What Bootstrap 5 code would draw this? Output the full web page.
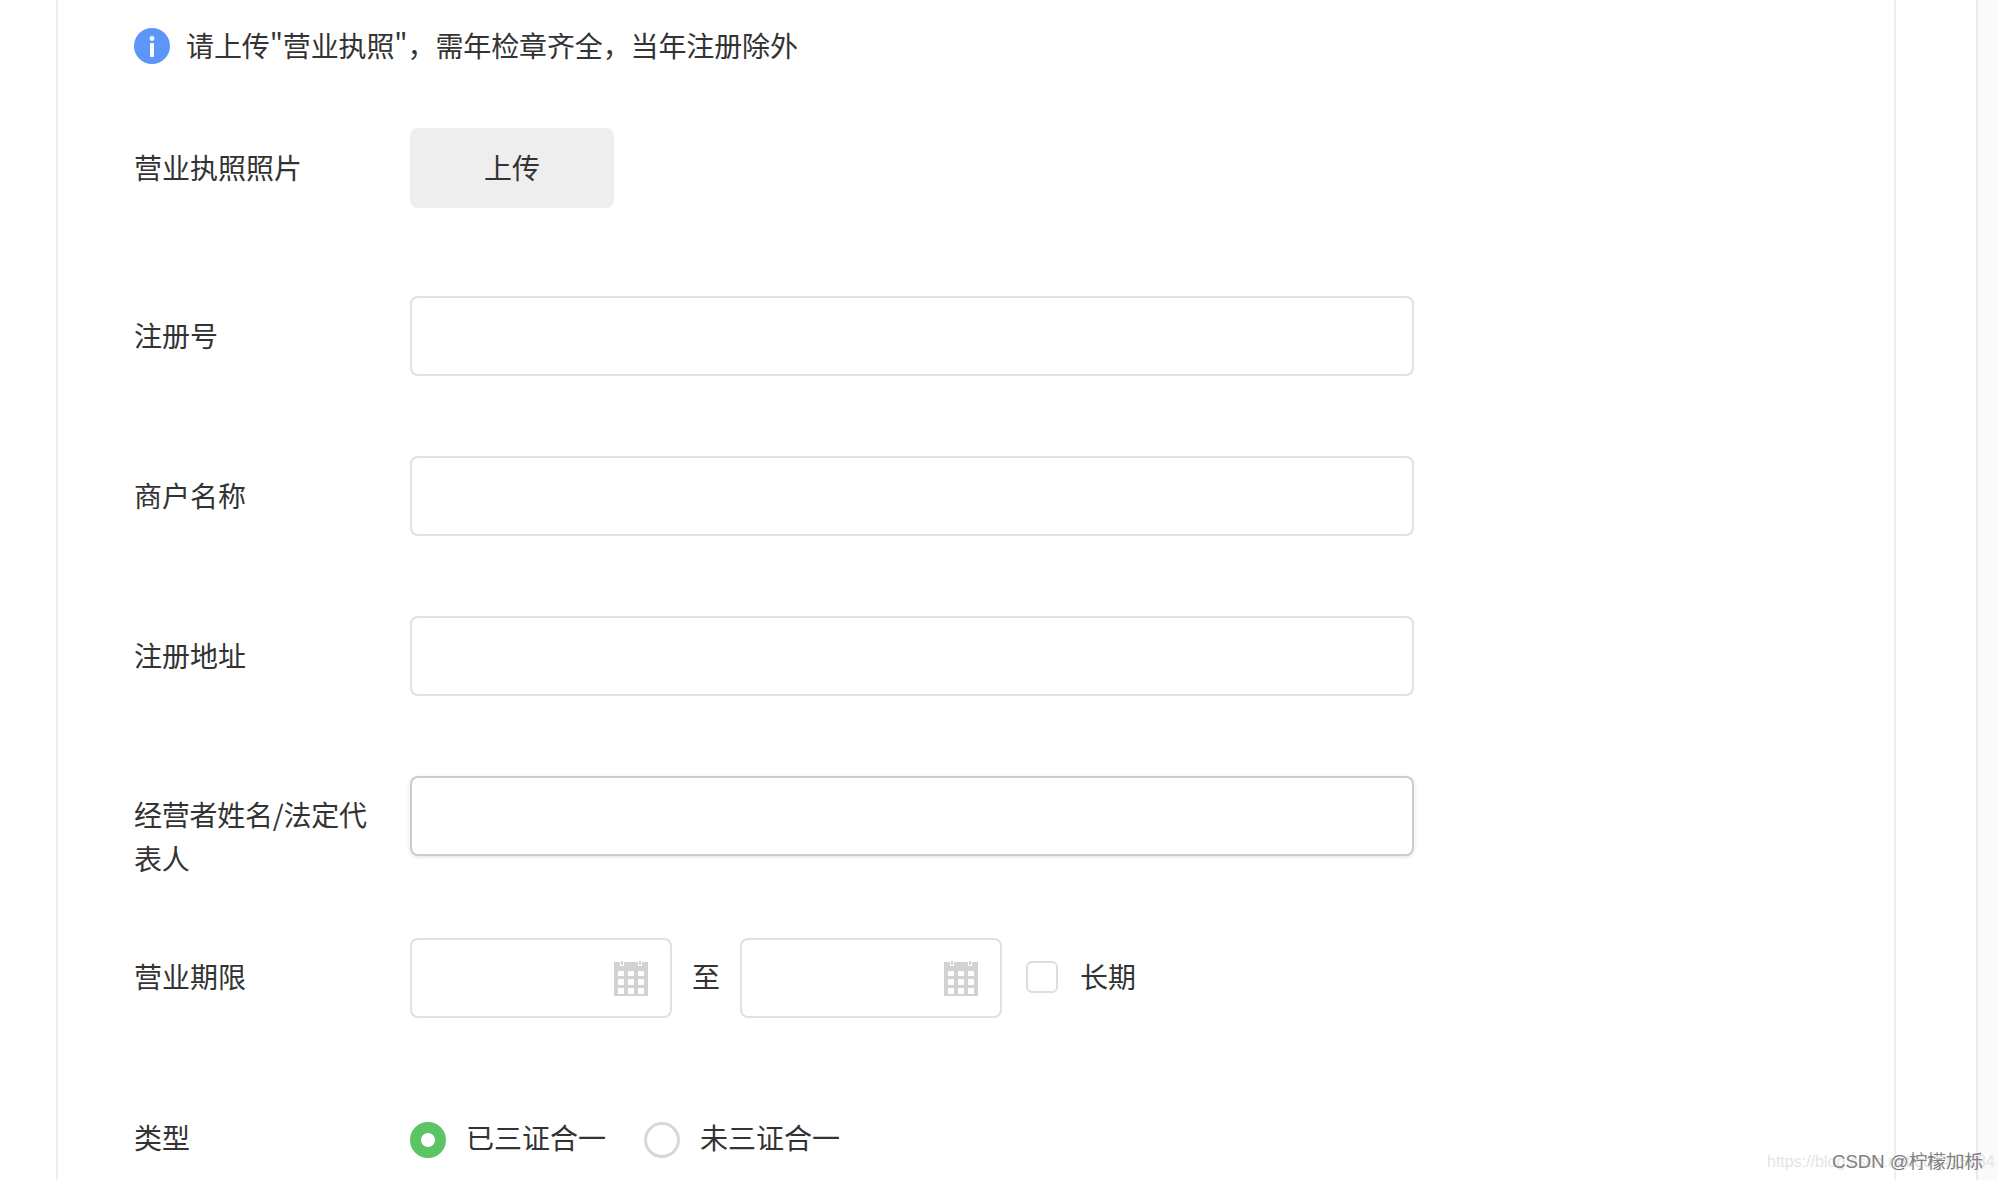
<!DOCTYPE html>
<html lang="zh-CN">
<head>
  <meta charset="UTF-8">
  <title>营业执照</title>
  <link href="https://cdn.jsdelivr.net/npm/bootstrap@5.3.0/dist/css/bootstrap.min.css" rel="stylesheet">
  <style>
    html, body { height: 1180px; overflow: hidden; }
    body { background: #f9fafc; color: #333; font-family: "Noto Sans CJK SC", "Liberation Sans", sans-serif; font-size: 28px; line-height: 44px; }
    .page-wrap { width: 1978px; height: 1180px; background: #fff; border-right: 2px solid #e9e9ef; padding: 0 80px 0 56px; }
    .panel-box { height: 1180px; border-left: 2px solid #eee; border-right: 2px solid #eee; padding: 28px 0 0 76px; }
    .info-line { height: 36px; margin-bottom: 64px; gap: 16px; }
    .info-line span { letter-spacing: -.12px; margin-bottom: 3px; }
    .form-line { min-height: 80px; margin-bottom: 80px; }
    .form-line > span, .form-line > label { margin-bottom: 3px; }
    .form-line.upload-line { margin-bottom: 88px; }
    .form-line.wrap-line { margin-bottom: 55px; }
    .form-line.wrap-line .field-label { padding-top: 16px; letter-spacing: -.25px; }
    .form-line.date-line > span, .form-line.date-line > label { margin-bottom: 4px; }
    .field-label { flex: 0 0 276px; padding-right: 36px; margin: 0; color: #333; }
    .btn-upload { width: 204px; height: 80px; background: #eee; border: 0; border-radius: 8px; color: #333; font-size: 28px; padding: 0 0 3px; }
    .form-control.field-input { width: 1004px; height: 80px; border: 2px solid #e0e0e0; border-radius: 8px; }
    .form-control.field-input.is-active { border-color: #ccc; box-shadow: 0 1px 4px rgba(0, 0, 0, .12); }
    .date-field { width: 262px; height: 80px; }
    .date-field .form-control { width: 100%; height: 100%; border: 2px solid #e0e0e0; border-radius: 8px; }
    .date-field svg { position: absolute; right: 24px; top: 22px; }
    .date-sep { width: 68px; text-align: center; }
    .form-check-input.box-check { width: 32px; height: 32px; margin: 0 22px 2px 24px; border: 2px solid #ddd; border-radius: 6px; }
    .form-check-input.dot-radio { width: 36px; height: 36px; margin: 4px 20px 0 0; border: 3px solid #d8d8d8; }
    .form-check-input.dot-radio:checked { background: #fff; background-image: none; border: 11px solid #5cc464; }
    .radio-text { margin-right: 38px; }
    .mark-csdn { position: absolute; left: 1832px; top: 1148px; font-family: "Liberation Sans", "Noto Sans CJK SC", sans-serif; font-size: 18.6px; line-height: 28px; color: #808080; }
    .mark-url { position: absolute; left: 1767px; top: 1151px; font-family: "Liberation Sans", sans-serif; font-size: 16px; line-height: 22px; color: #e4e4e4; }
  </style>
</head>
<body>
  <div class="page-wrap">
    <div class="panel-box">

      <!-- Aviso -->
      <div class="d-flex align-items-center info-line">
        <svg width="36" height="36" viewBox="0 0 36 36">
          <circle cx="18" cy="18" r="18" fill="#5b96f8"/>
          <circle cx="18" cy="10.5" r="2.4" fill="#fff"/>
          <rect x="16" y="15" width="4" height="14" rx="1" fill="#fff"/>
        </svg>
        <span>请上传"营业执照"，需年检章齐全，当年注册除外</span>
      </div>

      <form>
        <div class="d-flex align-items-center form-line upload-line">
          <label class="field-label">营业执照照片</label>
          <button type="button" class="btn btn-upload">上传</button>
        </div>

        <div class="d-flex align-items-center form-line">
          <label class="field-label">注册号</label>
          <input type="text" class="form-control field-input">
        </div>

        <div class="d-flex align-items-center form-line">
          <label class="field-label">商户名称</label>
          <input type="text" class="form-control field-input">
        </div>

        <div class="d-flex align-items-center form-line">
          <label class="field-label">注册地址</label>
          <input type="text" class="form-control field-input">
        </div>

        <div class="d-flex align-items-start form-line wrap-line">
          <label class="field-label">经营者姓名/法定代表人</label>
          <input type="text" class="form-control field-input is-active">
        </div>

        <!-- Fechas -->
        <div class="d-flex align-items-center form-line date-line">
          <label class="field-label">营业期限</label>
          <div class="position-relative date-field">
            <input type="text" class="form-control">
            <svg width="34" height="36" viewBox="0 0 34 36"><use href="#cal"/></svg>
          </div>
          <span class="date-sep">至</span>
          <div class="position-relative date-field">
            <input type="text" class="form-control">
            <svg width="34" height="36" viewBox="0 0 34 36"><use href="#cal"/></svg>
          </div>
          <input type="checkbox" class="form-check-input box-check">
          <span>长期</span>
        </div>

        <div class="d-flex align-items-center form-line">
          <label class="field-label">类型</label>
          <input type="radio" name="tipo" class="form-check-input dot-radio" checked>
          <span class="radio-text">已三证合一</span>
          <input type="radio" name="tipo" class="form-check-input dot-radio">
          <span>未三证合一</span>
        </div>
      </form>
    </div>
  </div>

  <svg width="0" height="0" class="position-absolute">
    <symbol id="cal" viewBox="0 0 34 36">
      <rect x="0" y="2" width="34" height="34" fill="#d2d2d2"/>
      <path d="M6 0h4v6H6zM24 0h4v6h-4z" fill="#fff"/>
      <path d="M7 1h2v4H7zM25 1h2v4h-2z" fill="#d2d2d2"/>
      <g fill="#fff">
        <rect x="4" y="11" width="6" height="5"/><rect x="14" y="11" width="6" height="5"/><rect x="24" y="11" width="6" height="5"/>
        <rect x="4" y="19" width="6" height="6"/><rect x="14" y="19" width="6" height="6"/><rect x="24" y="19" width="6" height="6"/>
        <rect x="4" y="28" width="6" height="6"/><rect x="14" y="28" width="6" height="6"/><rect x="24" y="28" width="6" height="6"/>
      </g>
    </symbol>
  </svg>

  <div class="mark-url">https://blog.csdn.net/qq_435284</div>
  <div class="mark-csdn">CSDN @柠檬加栎</div>

  <script src="https://cdn.jsdelivr.net/npm/bootstrap@5.3.0/dist/js/bootstrap.bundle.min.js"></script>
</body>
</html>
